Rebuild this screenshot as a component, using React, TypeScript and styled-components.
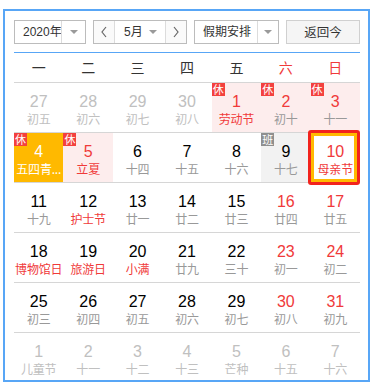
import styled, { createGlobalStyle, css } from 'styled-components';

const GlobalStyle = createGlobalStyle`
  html, body {
    margin: 0;
    padding: 0;
    background: #fff;
  }
  body {
    font-family: 'Liberation Sans', 'Noto Sans CJK SC', sans-serif;
  }
`;

const RED = '#f03a3a';
const BLUE = '#58a6f6';

const Calendar = styled.div`
  box-sizing: border-box;
  width: 367px;
  height: 373px;
  margin: 9px 0 0 3px;
  padding: 9px 8px 0 9px;
  border: 2px solid ${BLUE};
  overflow: hidden;
`;

const Toolbar = styled.div`
  display: flex;
  justify-content: space-between;
  height: 24px;
  padding-bottom: 8px;
  border-bottom: 1px solid ${BLUE};
`;

const SelectBox = styled.div<{ $w: number }>`
  display: flex;
  box-sizing: border-box;
  width: ${(p) => p.$w}px;
  height: 24px;
  border: 1px solid #bcbcbc;
  background: #fff;
  font-family: 'Liberation Sans', 'Noto Sans CJK SC', sans-serif;
  font-size: 12px;
  line-height: 22px;
  color: #333;
`;

const Label = styled.div<{ $pl: number }>`
  flex: 1;
  min-width: 0;
  padding-left: ${(p) => p.$pl}px;
  white-space: nowrap;
`;

const ArrowCell = styled.div<{ $w: number }>`
  display: flex;
  flex: none;
  align-items: center;
  justify-content: center;
  width: ${(p) => p.$w}px;
  border-left: 1px solid #dcdcdc;
`;

const Caret = styled.span`
  width: 0;
  height: 0;
  border-left: 4px solid transparent;
  border-right: 4px solid transparent;
  border-top: 4px solid #9a9a9a;
`;

const NavBtn = styled.div<{ $side: 'left' | 'right' }>`
  display: flex;
  align-items: center;
  justify-content: center;
  width: 20px;
  background: #fafafa;
  ${(p) =>
    p.$side === 'left'
      ? css`
          border-right: 1px solid #dcdcdc;
        `
      : css`
          border-left: 1px solid #dcdcdc;
        `}
`;

const MonthBody = styled.div`
  flex: 1;
  display: flex;
  align-items: center;
  padding-left: 9px;
  padding-right: 8px;
  justify-content: space-between;
`;

const TodayButton = styled.div`
  box-sizing: border-box;
  width: 74px;
  height: 24px;
  border: 1px solid #d0d0d0;
  background: #f5f5f5;
  font-family: 'Noto Sans CJK SC', sans-serif;
  font-size: 12.5px;
  line-height: 22px;
  text-align: center;
  color: #333;
`;

const WeekHeader = styled.div`
  display: grid;
  grid-template-columns: repeat(7, 1fr);
  height: 29px;
  line-height: 29px;
  font-family: 'Noto Sans CJK SC', sans-serif;
  font-size: 14px;
  text-align: center;
`;

const WeekName = styled.div<{ $weekend: boolean }>`
  color: ${(p) => (p.$weekend ? RED : '#333')};
`;

const Week = styled.div`
  display: grid;
  grid-template-columns: repeat(7, 1fr);
  box-sizing: border-box;
  height: 50px;
  border-top: 1px solid #d6d6d6;
`;

type Tone = 'none' | 'holiday' | 'work' | 'festival';

const cellBg: Record<Tone, string> = {
  none: 'transparent',
  holiday: '#fdeded',
  work: '#f2f2f2',
  festival: '#ffb900',
};

const Cell = styled.div<{ $tone: Tone; $today: boolean }>`
  position: relative;
  min-width: 0;
  padding-top: 10px;
  text-align: center;
  background: ${(p) => cellBg[p.$tone]};
  ${(p) =>
    p.$today &&
    css`
      &::after {
        content: '';
        position: absolute;
        top: -3px;
        left: -3px;
        right: 0;
        bottom: -3px;
        border: 3px solid #f2231d;
        border-radius: 3px;
        box-shadow: inset 0 0 0 3px #ffb900;
      }
    `}
`;

const DayNum = styled.div<{ $color: string }>`
  font-family: 'Liberation Sans', sans-serif;
  font-size: 16px;
  line-height: 18px;
  color: ${(p) => p.$color};
`;

const Lunar = styled.div<{ $color: string }>`
  font-family: 'Noto Sans CJK SC', sans-serif;
  font-size: 12px;
  line-height: 15px;
  color: ${(p) => p.$color};
  white-space: nowrap;
  letter-spacing: -0.2px;
`;

const Badge = styled.span<{ $kind: '休' | '班' }>`
  position: absolute;
  top: 0;
  left: 0;
  width: 13px;
  height: 13px;
  font-family: 'Noto Sans CJK SC', sans-serif;
  font-size: 11px;
  line-height: 13px;
  text-align: center;
  color: #fff;
  background: ${(p) => (p.$kind === '休' ? '#f3413e' : '#8f8f8f')};
`;

type Day = {
  d: number;
  l: string;
  muted?: boolean;
  fest?: boolean;
  tone?: Tone;
  tag?: '休' | '班';
  today?: boolean;
};

const days: Day[] = [
  { d: 27, l: '初五', muted: true },
  { d: 28, l: '初六', muted: true },
  { d: 29, l: '初七', muted: true },
  { d: 30, l: '初八', muted: true },
  { d: 1, l: '劳动节', fest: true, tone: 'holiday', tag: '休' },
  { d: 2, l: '初十', tone: 'holiday', tag: '休' },
  { d: 3, l: '十一', tone: 'holiday', tag: '休' },
  { d: 4, l: '五四青...', tone: 'festival', tag: '休' },
  { d: 5, l: '立夏', fest: true, tone: 'holiday', tag: '休' },
  { d: 6, l: '十四' },
  { d: 7, l: '十五' },
  { d: 8, l: '十六' },
  { d: 9, l: '十七', tone: 'work', tag: '班' },
  { d: 10, l: '母亲节', fest: true, today: true },
  { d: 11, l: '十九' },
  { d: 12, l: '护士节', fest: true },
  { d: 13, l: '廿一' },
  { d: 14, l: '廿二' },
  { d: 15, l: '廿三' },
  { d: 16, l: '廿四' },
  { d: 17, l: '廿五' },
  { d: 18, l: '博物馆日', fest: true },
  { d: 19, l: '旅游日', fest: true },
  { d: 20, l: '小满', fest: true },
  { d: 21, l: '廿九' },
  { d: 22, l: '三十' },
  { d: 23, l: '初一' },
  { d: 24, l: '初二' },
  { d: 25, l: '初三' },
  { d: 26, l: '初四' },
  { d: 27, l: '初五' },
  { d: 28, l: '初六' },
  { d: 29, l: '初七' },
  { d: 30, l: '初八' },
  { d: 31, l: '初九' },
  { d: 1, l: '儿童节', muted: true },
  { d: 2, l: '十一', muted: true },
  { d: 3, l: '十二', muted: true },
  { d: 4, l: '十三', muted: true },
  { d: 5, l: '芒种', muted: true },
  { d: 6, l: '十五', muted: true },
  { d: 7, l: '十六', muted: true },
];

const weekNames = ['一', '二', '三', '四', '五', '六', '日'];

function Chevron({ dir }: { dir: 'left' | 'right' }) {
  const pts = dir === 'left' ? '6,1 2,6 6,11' : '2,1 6,6 2,11';
  return (
    <svg width="8" height="12" viewBox="0 0 8 12">
      <polyline points={pts} fill="none" stroke="#666" strokeWidth="1.2" />
    </svg>
  );
}

function colors(day: Day, col: number) {
  if (day.muted) return { num: '#c0c0c0', lunar: '#c0c0c0' };
  if (day.tone === 'festival') return { num: '#fff', lunar: '#fff' };
  const red = day.tone !== 'work' && (col >= 5 || day.tone === 'holiday');
  return {
    num: red ? RED : '#000',
    lunar: day.fest ? RED : '#999',
  };
}

export default function App() {
  const weeks: Day[][] = [];
  for (let i = 0; i < days.length; i += 7) weeks.push(days.slice(i, i + 7));

  return (
    <>
      <GlobalStyle />
      <Calendar>
        <Toolbar>
          <SelectBox $w={72}>
            <Label $pl={8}>2020年</Label>
            <ArrowCell $w={23}>
              <Caret />
            </ArrowCell>
          </SelectBox>
          <SelectBox $w={94}>
            <NavBtn $side="left">
              <Chevron dir="left" />
            </NavBtn>
            <MonthBody>
              <span>5月</span>
              <Caret />
            </MonthBody>
            <NavBtn $side="right">
              <Chevron dir="right" />
            </NavBtn>
          </SelectBox>
          <SelectBox $w={85}>
            <Label $pl={8}>假期安排</Label>
            <ArrowCell $w={20}>
              <Caret />
            </ArrowCell>
          </SelectBox>
          <TodayButton>返回今</TodayButton>
        </Toolbar>
        <WeekHeader>
          {weekNames.map((n, i) => (
            <WeekName key={n} $weekend={i >= 5}>
              {n}
            </WeekName>
          ))}
        </WeekHeader>
        {weeks.map((week, wi) => (
          <Week key={wi}>
            {week.map((day, ci) => {
              const c = colors(day, ci);
              return (
                <Cell key={ci} $tone={day.tone ?? 'none'} $today={!!day.today}>
                  {day.tag && <Badge $kind={day.tag}>{day.tag}</Badge>}
                  <DayNum $color={c.num}>{day.d}</DayNum>
                  <Lunar $color={c.lunar}>{day.l}</Lunar>
                </Cell>
              );
            })}
          </Week>
        ))}
      </Calendar>
    </>
  );
}
